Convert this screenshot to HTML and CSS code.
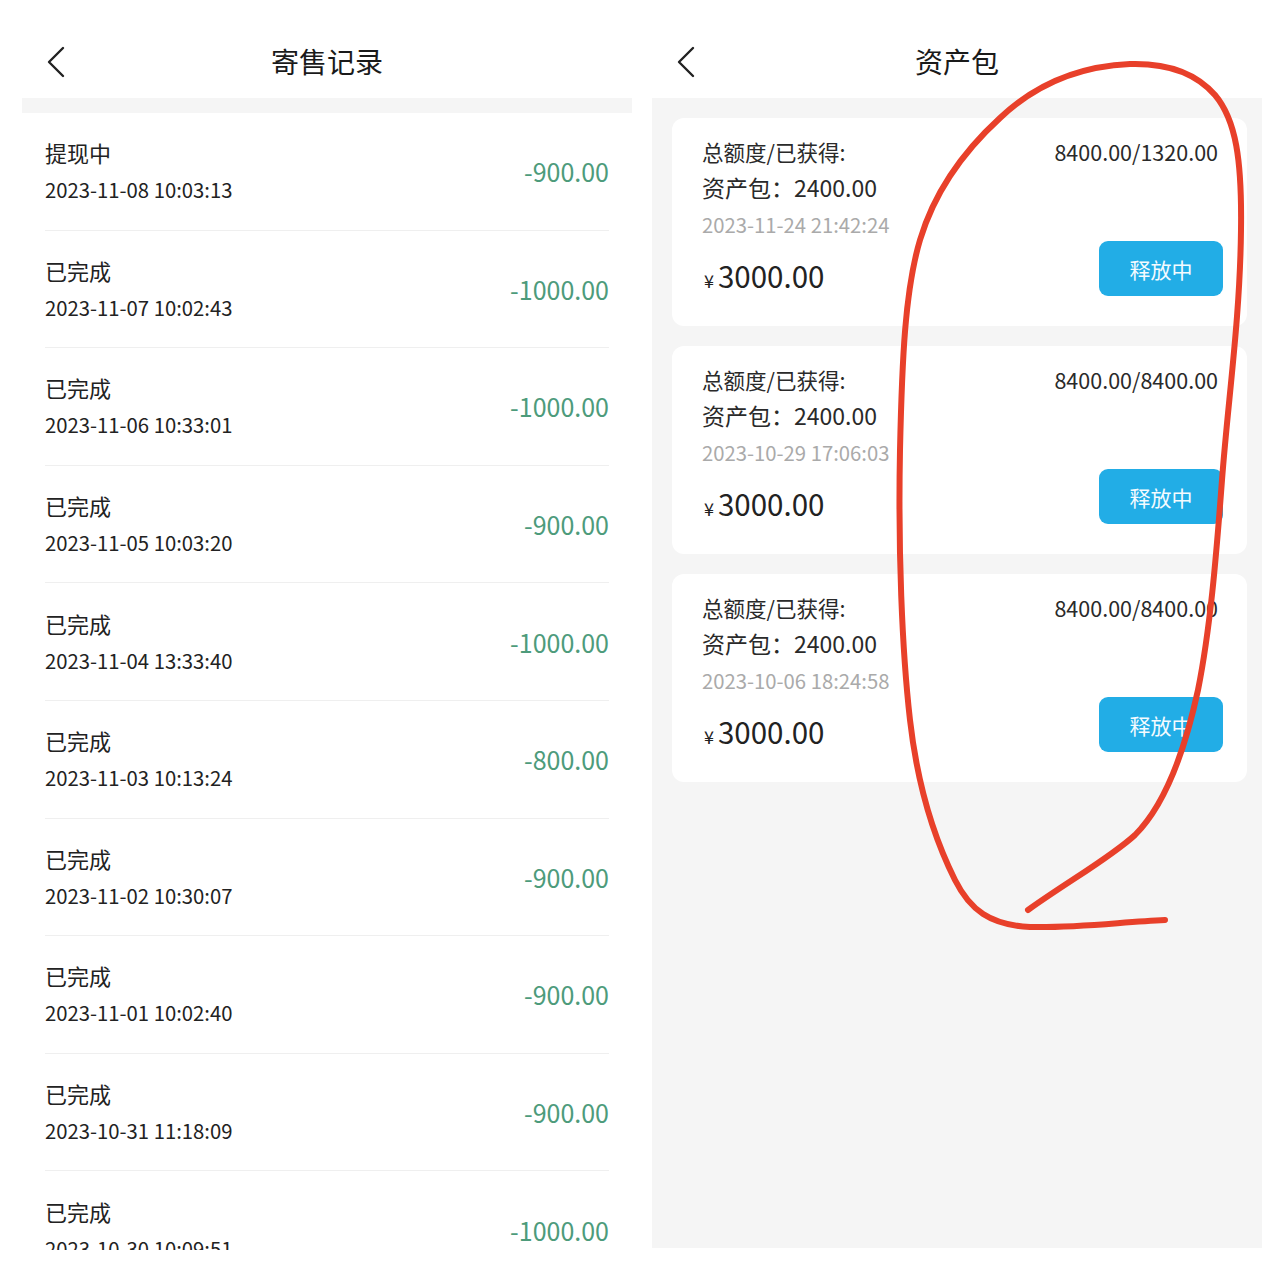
FILE: index.html
```html
<!DOCTYPE html>
<html lang="zh-CN">
<head>
    <meta charset="UTF-8">
    <meta name="viewport" content="width=device-width, initial-scale=1.0">
    <title>寄售记录 / 资产包</title>
    <link rel="stylesheet" href="styles.css">
</head>
<body>

    <div class="page">
        <!-- left screen: consignment records -->
        <div class="screen">
            <div class="header">
                <svg class="back" viewBox="0 0 20 32" width="20" height="32"><path d="M17 2 L3 16 L17 30" fill="none" stroke="#222" stroke-width="2.4" stroke-linecap="round" stroke-linejoin="round"/></svg>
                <h2>寄售记录</h2>
            </div>
            <div class="strip"></div>
            <ul class="records">
                <li class="record"><div><p class="status">提现中</p><p class="time">2023-11-08 10:03:13</p></div><span class="amount">-900.00</span></li>
                <li class="record"><div><p class="status">已完成</p><p class="time">2023-11-07 10:02:43</p></div><span class="amount">-1000.00</span></li>
                <li class="record"><div><p class="status">已完成</p><p class="time">2023-11-06 10:33:01</p></div><span class="amount">-1000.00</span></li>
                <li class="record"><div><p class="status">已完成</p><p class="time">2023-11-05 10:03:20</p></div><span class="amount">-900.00</span></li>
                <li class="record"><div><p class="status">已完成</p><p class="time">2023-11-04 13:33:40</p></div><span class="amount">-1000.00</span></li>
                <li class="record"><div><p class="status">已完成</p><p class="time">2023-11-03 10:13:24</p></div><span class="amount">-800.00</span></li>
                <li class="record"><div><p class="status">已完成</p><p class="time">2023-11-02 10:30:07</p></div><span class="amount">-900.00</span></li>
                <li class="record"><div><p class="status">已完成</p><p class="time">2023-11-01 10:02:40</p></div><span class="amount">-900.00</span></li>
                <li class="record"><div><p class="status">已完成</p><p class="time">2023-10-31 11:18:09</p></div><span class="amount">-900.00</span></li>
                <li class="record"><div><p class="status">已完成</p><p class="time">2023-10-30 10:09:51</p></div><span class="amount">-1000.00</span></li>
            </ul>
        </div>

        <!-- right screen: asset packages -->
        <div class="screen grey">
            <div class="header">
                <svg class="back" viewBox="0 0 20 32" width="20" height="32"><path d="M17 2 L3 16 L17 30" fill="none" stroke="#222" stroke-width="2.4" stroke-linecap="round" stroke-linejoin="round"/></svg>
                <h2>资产包</h2>
            </div>
            <div class="cards">
                <div class="card">
                    <div class="row"><span class="label">总额度/已获得:</span><span class="value">8400.00/1320.00</span></div>
                    <p class="pack">资产包：2400.00</p>
                    <p class="date">2023-11-24 21:42:24</p>
                    <div class="row bottom"><span class="price"><small>¥</small>3000.00</span><button class="btn">释放中</button></div>
                </div>
                <div class="card">
                    <div class="row"><span class="label">总额度/已获得:</span><span class="value">8400.00/8400.00</span></div>
                    <p class="pack">资产包：2400.00</p>
                    <p class="date">2023-10-29 17:06:03</p>
                    <div class="row bottom"><span class="price"><small>¥</small>3000.00</span><button class="btn">释放中</button></div>
                </div>
                <div class="card">
                    <div class="row"><span class="label">总额度/已获得:</span><span class="value">8400.00/8400.00</span></div>
                    <p class="pack">资产包：2400.00</p>
                    <p class="date">2023-10-06 18:24:58</p>
                    <div class="row bottom"><span class="price"><small>¥</small>3000.00</span><button class="btn">释放中</button></div>
                </div>
            </div>
        </div>

        <!-- hand-drawn red circle over the right screen -->
        <svg class="scribble" viewBox="0 0 1280 1280" width="1280" height="1280">
            <path d="M1028 910 C1070 880 1110 858 1135 835 C1165 805 1185 750 1198 690 C1210 630 1216 560 1222 480 C1228 400 1240 320 1241 230 C1242 160 1236 120 1215 95 C1195 72 1165 63 1130 64 C1085 66 1040 80 1000 118 C965 150 935 190 920 240 C905 290 902 360 900 450 C898 550 902 650 910 720 C918 790 935 840 955 880 C970 910 990 925 1030 927 C1080 928 1120 922 1165 920" fill="none" stroke="#e8402a" stroke-width="6" stroke-linecap="round" stroke-linejoin="round"/>
        </svg>
    </div>

</body>
</html>
```

FILE: styles.css
```css
body {
    margin: 0;
    background: #fff;
    font-family: "Noto Sans CJK SC", "Noto Sans", sans-serif;
    color: #222;
}
p {
    margin: 0;
}
.page {
    position: relative;
    display: flex;
    gap: 20px;
    padding-left: 22px;
    width: 1280px;
    height: 1280px;
    box-sizing: border-box;
}
.screen {
    width: 610px;
    height: 1250px;
    overflow: hidden;
    background: #fff;
}
.header {
    position: relative;
    height: 98px;
    box-sizing: border-box;
    padding-top: 24px;
    display: flex;
    align-items: center;
    justify-content: center;
    background: #fff;
}
.header h2 {
    margin: 0;
    font-size: 28px;
    font-weight: 400;
    color: #1a1a1a;
}
.back {
    position: absolute;
    left: 24px;
    top: 46px;
}
.strip {
    height: 15px;
    background: #f5f5f5;
}
.records {
    list-style: none;
    margin: 0;
    padding: 0 23px;
}
.record {
    display: flex;
    justify-content: space-between;
    align-items: center;
    height: 117.6px;
    box-sizing: border-box;
    border-bottom: 1px solid #efefef;
}
.status {
    font-size: 22px;
    line-height: 37px;
}
.time {
    font-size: 20.3px;
    line-height: 37px;
}
.amount {
    font-size: 25px;
    color: #4d9b7b;
}
.grey {
    background: #f5f5f5;
    height: 1248px;
}
.cards {
    display: flex;
    flex-direction: column;
    gap: 20px;
    padding: 20px 15px 0 20px;
}
.card {
    background: #fff;
    border-radius: 12px;
    padding: 16px 24px 26px 30px;
    height: 208px;
    box-sizing: border-box;
}
.row {
    display: flex;
    justify-content: space-between;
    align-items: center;
}
.label {
    font-size: 21.5px;
    line-height: 36px;
    color: #2a2a2a;
}
.value {
    font-size: 21.5px;
    line-height: 36px;
    margin-right: 5px;
    color: #2a2a2a;
}
.pack {
    font-size: 23px;
    line-height: 35px;
    color: #2a2a2a;
}
.date {
    font-size: 20.3px;
    line-height: 38px;
    color: #aaa;
}
.bottom {
    margin-top: -2px;
}
.price {
    font-size: 29.5px;
    padding-top: 12px;
    margin-left: 2px;
}
.price small {
    font-size: 18px;
    margin-right: 4px;
}
.btn {
    width: 124px;
    height: 55px;
    border: none;
    border-radius: 9px;
    background: #22ade6;
    color: #f4fbff;
    font-family: inherit;
    font-size: 21px;
}
.scribble {
    position: absolute;
    left: 0;
    top: 0;
    pointer-events: none;
}
```
